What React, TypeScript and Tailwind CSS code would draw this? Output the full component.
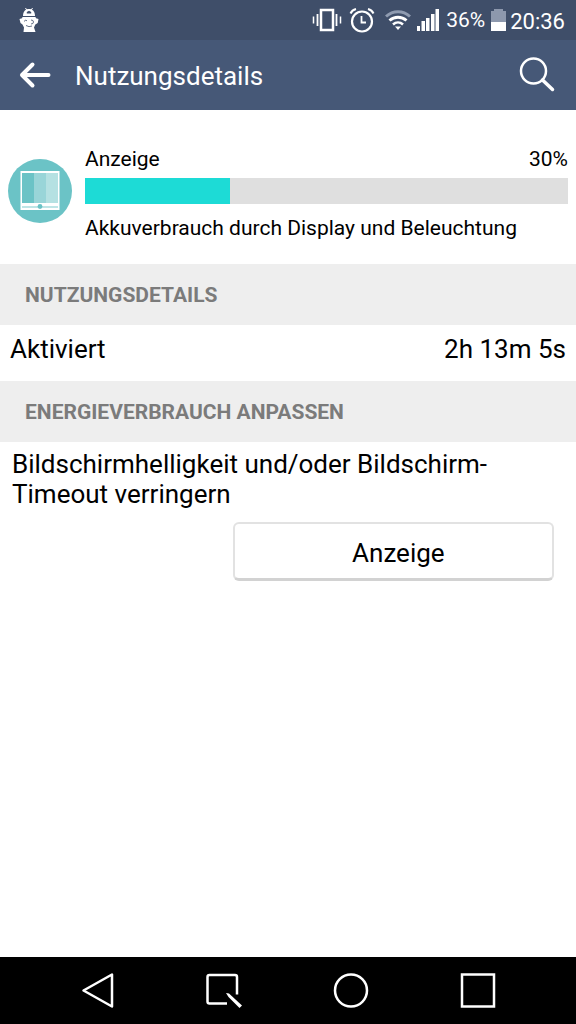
import type { ReactNode } from "react";

const USAGE_PERCENT = 30;

function CyanogenIcon() {
  return (
    <svg width="20" height="26" viewBox="0 0 20 26" fill="none" aria-hidden="true">
      <path d="M4 9C4 4.500 6.500 2 10 2s6 2.500 6 7Z" fill="#fff" />
      <path d="M6.500 1l1.200 2M13.500 1l-1.200 2" stroke="#fff" strokeWidth="1" />
      <path d="M7.800 6.500V5L10 3.800 12.200 5v1.500Z" fill="#3f4e69" />
      <path d="M3.500 10h13l.5 1.200 2.500.8-.8 4-2.400 1.500-1.300 3 1.500 4.500h-12l.5-4.500-1.500-3L1.500 16 .5 12l2.500-.8Z" fill="#fff" />
      <path d="M5 14.500q1-2 3-.8M7 18.500q3 2 6 .5M12 13q2.500 0 2.500 2t-2.500 2" stroke="#3f4e69" strokeWidth=".8" />
    </svg>
  );
}

function VibrateIcon() {
  return (
    <svg width="30" height="26" viewBox="0 0 30 26" fill="none" stroke="#fff" aria-hidden="true">
      <rect x="9" y="3" width="12" height="20" strokeWidth="2.500" />
      <path d="M5.500 7v12M24.500 7v12" strokeWidth="1.800" />
      <path d="M1.500 9.500v7M28.500 9.500v7" strokeWidth="1.500" />
    </svg>
  );
}

function AlarmIcon() {
  return (
    <svg width="26" height="26" viewBox="0 0 26 26" fill="none" stroke="#fff" aria-hidden="true">
      <circle cx="13" cy="14.500" r="10" strokeWidth="2.200" />
      <path d="M12.500 9v6.500H17" strokeWidth="1.800" />
      <path d="M1.500 6.500Q3 3 7 2M24.500 6.500Q23 3 19 2" strokeWidth="2" />
    </svg>
  );
}

function WifiIcon() {
  return (
    <svg width="26" height="22" viewBox="0 0 26 22" fill="none" aria-hidden="true">
      <path d="M1 7.500C8 1 18 1 25 7.500" stroke="#8f9bb0" strokeWidth="3" />
      <path d="M4.500 11.500c5-4.500 12-4.500 17 0" stroke="#fff" strokeWidth="3" />
      <path d="M8 15.500c3-2.800 7-2.800 10 0" stroke="#fff" strokeWidth="2.500" />
      <path d="M10 17.500h6L13 21Z" fill="#fff" />
    </svg>
  );
}

function SignalIcon() {
  return (
    <svg width="22" height="22" viewBox="0 0 22 22" fill="#fff" aria-hidden="true">
      <rect x="0" y="17" width="3" height="5" />
      <rect x="4.500" y="12" width="3.500" height="10" />
      <rect x="9" y="9" width="3.500" height="13" />
      <rect x="14" y="5" width="3.500" height="17" />
      <rect x="18.500" y="0" width="3.500" height="22" />
    </svg>
  );
}

function BatteryIcon() {
  return (
    <svg width="15" height="22" viewBox="0 0 15 22" aria-hidden="true">
      <path d="M0 2h3V0h9v2h3v11H0Z" fill="#8d98ad" />
      <rect y="13" width="15" height="9" fill="#fff" />
    </svg>
  );
}

function DisplayIcon() {
  return (
    <svg className="mt-[14px] size-16 shrink-0" viewBox="0 0 64 64" aria-hidden="true">
      <circle cx="32" cy="32" r="32" fill="#6bc3c6" />
      <rect x="12.500" y="12" width="39" height="39" fill="#fff" />
      <rect x="14" y="14" width="12" height="30" fill="#6bc3c6" />
      <rect x="26" y="14" width="12" height="30" fill="#99d5d8" />
      <rect x="38" y="14" width="12" height="30" fill="#b5e1e2" />
      <path d="M14 48h36" stroke="#a9dcde" strokeWidth="1.500" />
      <circle cx="32" cy="47.500" r="2.400" fill="#6bc3c6" />
    </svg>
  );
}

function SectionHeader({ children }: { children: ReactNode }) {
  return (
    <h2 className="flex h-[61px] items-center bg-[#eeeeee] px-[25px] pt-[2px] text-[21px] font-bold text-[#7b7b7b]">
      {children}
    </h2>
  );
}

function NavButton({ label, children }: { label: string; children: ReactNode }) {
  return (
    <button type="button" aria-label={label} className="flex items-center justify-center">
      <svg width="40" height="40" viewBox="0 0 40 40" fill="none" stroke="#fff" strokeWidth="2.500">
        {children}
      </svg>
    </button>
  );
}

export default function App() {
  return (
    <div className="flex min-h-screen flex-col bg-white font-[Roboto,sans-serif] text-black">
      <div className="flex h-10 items-center justify-between bg-[#3f4e69] pr-[11px] pl-[19px] text-white">
        <CyanogenIcon />
        <div className="flex items-center">
          <VibrateIcon />
          <span className="ml-[7px]">
            <AlarmIcon />
          </span>
          <span className="ml-[10px]">
            <WifiIcon />
          </span>
          <span className="ml-[6px]">
            <SignalIcon />
          </span>
          <span className="ml-[7px] pt-[2px] text-[21px]">36%</span>
          <span className="ml-[6px]">
            <BatteryIcon />
          </span>
          <span className="ml-[4px] pt-[2px] text-[22px]">20:36</span>
        </div>
      </div>

      <header className="flex h-[70px] items-center bg-[#465877] pr-[21px] pl-[19px] text-white">
        <button type="button" aria-label="Zurück">
          <svg width="32" height="28" viewBox="0 0 32 28" fill="none" stroke="#fff" strokeWidth="4" strokeLinecap="round" strokeLinejoin="round">
            <path d="M13.500 3.500L3 14l10.500 10.500M3 14h26.500" />
          </svg>
        </button>
        <h1 className="ml-6 flex-1 pt-[3px] text-[26px]">Nutzungsdetails</h1>
        <button type="button" aria-label="Suchen">
          <svg width="36" height="36" viewBox="0 0 36 36" fill="none" stroke="#fff" strokeLinecap="round">
            <circle cx="14.500" cy="14" r="12.500" strokeWidth="2.500" />
            <path d="M23.500 23l10 9.500" strokeWidth="3.500" />
          </svg>
        </button>
      </header>

      <main className="flex-1">
        <section className="flex items-start gap-[13px] px-2 pt-[35px] pb-[22px]">
          <DisplayIcon />
          <div className="flex-1">
            <div className="flex justify-between text-[21px] leading-[28px]">
              <span>Anzeige</span>
              <span>{USAGE_PERCENT}%</span>
            </div>
            <div className="mt-[5px] h-[26px] bg-[#dfdfdf]">
              <div className="h-full bg-[#1ddbd6]" style={{ width: `${USAGE_PERCENT}%` }} />
            </div>
            <p className="mt-[10px] text-[21px] leading-[28px]">Akkuverbrauch durch Display und Beleuchtung</p>
          </div>
        </section>

        <SectionHeader>NUTZUNGSDETAILS</SectionHeader>
        <div className="flex h-14 justify-between px-[10px] pt-[9px] text-[26px] leading-[30px]">
          <span>Aktiviert</span>
          <span>2h 13m 5s</span>
        </div>

        <SectionHeader>ENERGIEVERBRAUCH ANPASSEN</SectionHeader>
        <div className="px-3 pt-[7px]">
          <p className="text-[26px] leading-[30px]">
            Bildschirmhelligkeit und/oder Bildschirm-
            <br />
            Timeout verringern
          </p>
        </div>
        <div className="flex justify-end pt-[13px] pr-[22px]">
          <button
            type="button"
            className="h-[59px] w-[58%] rounded-md border-2 border-b-[3px] border-[#e2e2e2] border-b-[#d2d2d2] bg-white pt-[4px] pl-[10px] text-[26px]"
          >
            Anzeige
          </button>
        </div>
      </main>

      <nav className="grid h-[67px] grid-cols-4 bg-black px-[34px]">
        <NavButton label="Zurück">
          <path d="M5.500 19.500L34 3.500v32Z" strokeLinejoin="round" />
        </NavButton>
        <NavButton label="QSlide">
          <path d="M22 32.500H4.500q-2 0-2-2V6q0-2 2-2H30q2 0 2 2v17.500" />
          <path d="M21 22l3 .5 13 12-2.500 2.500-11-11Z" fill="#fff" stroke="none" />
        </NavButton>
        <NavButton label="Startseite">
          <circle cx="19" cy="19.500" r="16" />
        </NavButton>
        <NavButton label="Übersicht">
          <rect x="3" y="3.500" width="32" height="32" />
        </NavButton>
      </nav>
    </div>
  );
}
